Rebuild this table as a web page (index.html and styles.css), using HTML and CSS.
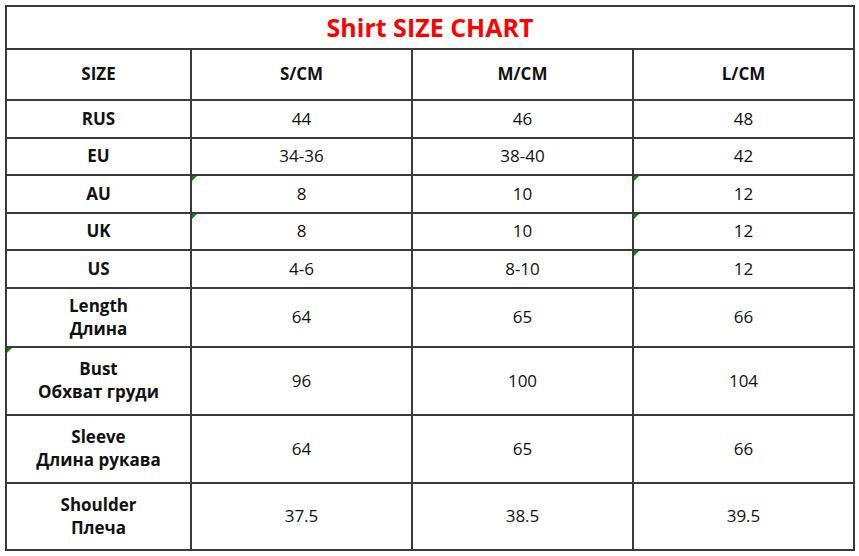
FILE: index.html
```html
<!DOCTYPE html>
<html lang="en">
<head>
<meta charset="utf-8">
<title>Shirt SIZE CHART</title>
<link rel="stylesheet" href="styles.css">
</head>
<body>
<div class="chart">
  <div class="cell title">Shirt SIZE CHART</div>

  <div class="cell b r-head">SIZE</div>
  <div class="cell b r-head">S/CM</div>
  <div class="cell b r-head">M/CM</div>
  <div class="cell b r-head">L/CM</div>

  <div class="cell b">RUS</div>
  <div class="cell">44</div>
  <div class="cell">46</div>
  <div class="cell">48</div>

  <div class="cell b">EU</div>
  <div class="cell">34-36</div>
  <div class="cell">38-40</div>
  <div class="cell">42</div>

  <div class="cell b">AU</div>
  <div class="cell flag">8</div>
  <div class="cell">10</div>
  <div class="cell flag">12</div>

  <div class="cell b">UK</div>
  <div class="cell flag">8</div>
  <div class="cell">10</div>
  <div class="cell flag">12</div>

  <div class="cell b">US</div>
  <div class="cell">4-6</div>
  <div class="cell">8-10</div>
  <div class="cell flag">12</div>

  <div class="cell b">Length<br>Длина</div>
  <div class="cell">64</div>
  <div class="cell">65</div>
  <div class="cell">66</div>

  <div class="cell b flag">Bust<br>Обхват груди</div>
  <div class="cell">96</div>
  <div class="cell">100</div>
  <div class="cell">104</div>

  <div class="cell b">Sleeve<br>Длина рукава</div>
  <div class="cell">64</div>
  <div class="cell">65</div>
  <div class="cell">66</div>

  <div class="cell b">Shoulder<br>Плеча</div>
  <div class="cell">37.5</div>
  <div class="cell">38.5</div>
  <div class="cell">39.5</div>
</div>
</body>
</html>
```

FILE: styles.css
```css
html, body {
  margin: 0;
  padding: 0;
  background: #ffffff;
}

body {
  padding: 5px 0 0 5px;
  font-family: "Open Sans", "DejaVu Sans", sans-serif;
  color: #111111;
}

.chart {
  display: grid;
  width: 850px;
  box-sizing: border-box;
  padding: 2px;
  gap: 2px;
  background: #3a3a3a;
  grid-template-columns: 183px 219px 219px 219px;
  grid-template-rows: 41px 49px 36px 35px 36px 35px 36px 57px 66px 66px 65px;
}

.cell {
  position: relative;
  background: #ffffff;
  display: flex;
  align-items: center;
  justify-content: center;
  text-align: center;
  font-size: 17px;
  line-height: 23px;
  padding-bottom: 2px;
  box-sizing: border-box;
}

.b {
  font-weight: 700;
}

.title {
  grid-column: 1 / -1;
  color: #ff0000;
  font-weight: 700;
  font-size: 25px;
  padding-bottom: 0;
}

.flag::before {
  content: "";
  position: absolute;
  left: 0;
  top: 0;
  width: 0;
  height: 0;
  border-top: 5px solid #0a8a0a;
  border-right: 5px solid transparent;
}
```
